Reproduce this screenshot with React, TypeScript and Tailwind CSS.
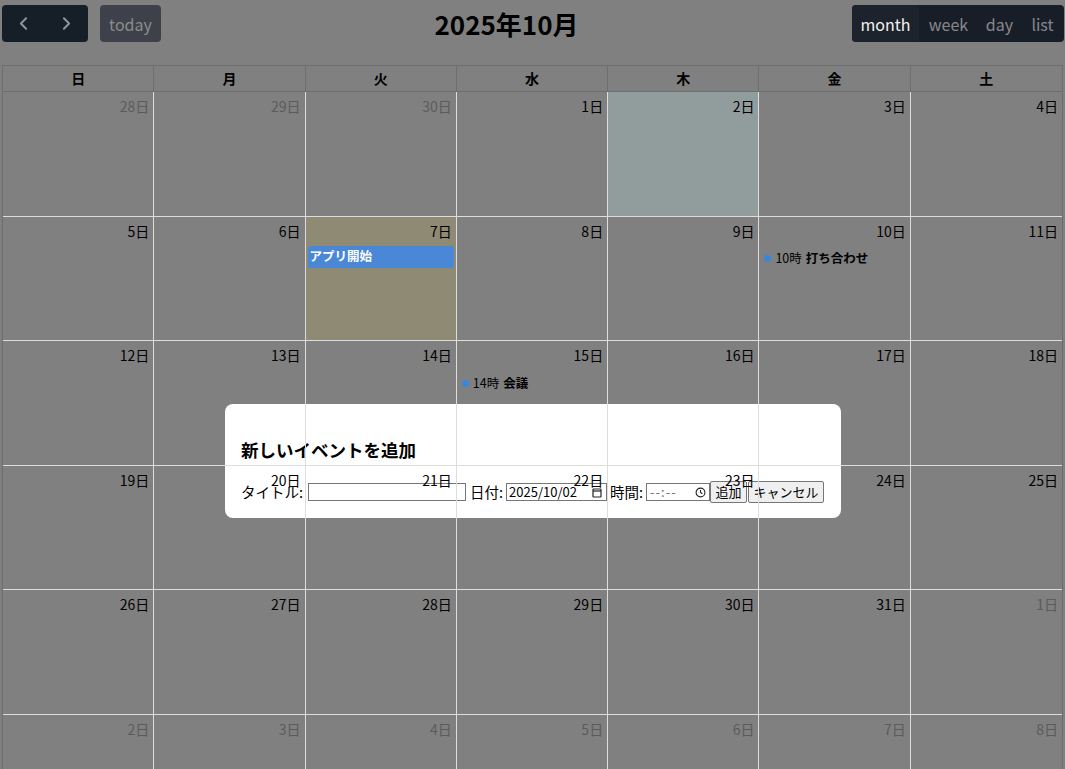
import React from 'react';
import { ChevronLeft, ChevronRight } from 'lucide-react';

const FONT = '"Noto Sans CJK JP", "Noto Sans", sans-serif';

type Day = { n: number; other?: boolean; today?: boolean; selected?: boolean };

const weeks: Day[][] = [
  [{ n: 28, other: true }, { n: 29, other: true }, { n: 30, other: true }, { n: 1 }, { n: 2, selected: true }, { n: 3 }, { n: 4 }],
  [{ n: 5 }, { n: 6 }, { n: 7, today: true }, { n: 8 }, { n: 9 }, { n: 10 }, { n: 11 }],
  [{ n: 12 }, { n: 13 }, { n: 14 }, { n: 15 }, { n: 16 }, { n: 17 }, { n: 18 }],
  [{ n: 19 }, { n: 20 }, { n: 21 }, { n: 22 }, { n: 23 }, { n: 24 }, { n: 25 }],
  [{ n: 26 }, { n: 27 }, { n: 28 }, { n: 29 }, { n: 30 }, { n: 31 }, { n: 1, other: true }],
  [{ n: 2, other: true }, { n: 3, other: true }, { n: 4, other: true }, { n: 5, other: true }, { n: 6, other: true }, { n: 7, other: true }, { n: 8, other: true }],
];

const weekdays = ['日', '月', '火', '水', '木', '金', '土'];

function DotEvent({ time, title }: { time: string; title: string }) {
  return (
    <div className="flex items-center h-[22px] mt-[6px] mx-[2px] px-[2px] text-[12.5px] text-black">
      <span className="w-[7px] h-[7px] rounded-full bg-[#3788d8] mr-[4px] ml-[1px]" />
      <span>{time}</span>
      <span className="ml-[4px] font-bold">{title}</span>
    </div>
  );
}

function DayCell({ day, col, week }: { day: Day; col: number; week: number }) {
  let bg = '';
  if (day.today) bg = 'bg-[#8f8a73]';
  if (day.selected) bg = 'bg-[#919c9d]';
  return (
    <div className={`h-[124.5px] border-b border-[#dddddd] ${col < 6 ? 'border-r' : ''} ${bg}`}>
      <div className={`flex justify-end pt-[4px] pr-[4px] text-[14px] ${day.other ? 'text-[#5b5b5b]' : 'text-black'}`}>
        {day.n}日
      </div>
      {week === 1 && col === 2 && (
        <div className="mt-[4px] mx-[2px] h-[22px] flex items-center px-[2px] rounded-[3px] bg-[#4a88d7] text-white font-bold text-[12.5px]">
          アプリ開始
        </div>
      )}
      {week === 1 && col === 5 && <DotEvent time="10時" title="打ち合わせ" />}
      {week === 2 && col === 3 && <DotEvent time="14時" title="会議" />}
    </div>
  );
}

export default function App() {
  return (
    <div className="relative min-h-screen bg-[#808080] px-[2px] pt-[5px] pb-[40px]" style={{ fontFamily: FONT }}>
      {/* Toolbar */}
      <div className="flex justify-between items-center mb-[23px]">
        <div className="flex items-center gap-[12px]">
          <div className="flex rounded-[4px] overflow-hidden bg-[#161f28]">
            <button className="w-[43px] h-[37px] flex items-center justify-center text-[#8b96a3]">
              <ChevronLeft size={21} strokeWidth={2.2} />
            </button>
            <button className="w-[43px] h-[37px] flex items-center justify-center text-[#8b96a3]">
              <ChevronRight size={21} strokeWidth={2.2} />
            </button>
          </div>
          <button className="h-[37px] w-[61px] rounded-[4px] bg-[#3e4149] text-[#8c8c8c] text-[16px]">today</button>
        </div>
        <h2 className="text-[26px] font-bold text-black leading-none">2025年10月</h2>
        <div className="flex rounded-[4px] overflow-hidden bg-[#181e28] text-[16px] mr-[-1px]">
          <button className="h-[37px] w-[67px] bg-[#1d232c] text-[#f2f2f2]">month</button>
          <button className="h-[37px] w-[59px] text-[#888888]">week</button>
          <button className="h-[37px] w-[43px] text-[#888888]">day</button>
          <button className="h-[37px] w-[43px] text-[#888888]">list</button>
        </div>
      </div>

      {/* Header row */}
      <div className="grid grid-cols-7 border border-[#6e6e6e] h-[27px]">
        {weekdays.map((w, i) => (
          <div key={w} className={`flex items-center justify-center text-[14px] font-bold text-black ${i < 6 ? 'border-r border-[#6e6e6e]' : ''}`}>
            {w}
          </div>
        ))}
      </div>

      {/* Body */}
      <div className="relative z-10 grid grid-cols-7 border-l border-r border-[#6e6e6e]">
        {weeks.map((wk, wi) =>
          wk.map((d, ci) => <DayCell key={`${wi}-${ci}`} day={d} col={ci} week={wi} />)
        )}
      </div>

      {/* Modal */}
      <div className="absolute z-0 left-[225px] top-[404px] w-[616px] bg-white rounded-[8px] px-[16px] pt-[34px] pb-[15px] text-black">
        <h3 className="text-[17.5px] font-bold leading-[24px]">新しいイベントを追加</h3>
        <div className="flex items-center mt-[19px] h-[22px] text-[14.5px] whitespace-nowrap">
          <span className="shrink-0">タイトル:</span>
          <span className="shrink-0 ml-[5px] w-[158px] h-[18px] border border-[#767676] bg-white" />
          <span className="shrink-0 ml-[4px]">日付:</span>
          <span className="shrink-0 ml-[3px] w-[101px] h-[18px] border border-[#767676] flex items-center justify-between pl-[2px] pr-[4px] text-[13px]">
            <span>2025/10/02</span>
            <svg width="10" height="11" viewBox="0 0 10 11" fill="none" stroke="#222" strokeWidth="1.2">
              <rect x="1" y="2" width="8" height="8" rx="0.5" />
              <line x1="1" y1="4" x2="9" y2="4" />
            </svg>
          </span>
          <span className="shrink-0 ml-[3px]">時間:</span>
          <span className="shrink-0 ml-[3px] w-[64px] h-[18px] border border-[#767676] flex items-center justify-between pl-[3px] pr-[3px] text-[13px] tracking-[1px] text-[#757575]">
            <span>--:--</span>
            <svg width="11" height="11" viewBox="0 0 12 12" fill="none" stroke="#222" strokeWidth="1.2">
              <circle cx="6" cy="6" r="4.8" />
              <path d="M6 3.2V6l2 1.4" />
            </svg>
          </span>
          <button className="shrink-0 w-[37px] h-[22px] border border-[#767676] bg-[#efefef] rounded-[2px] text-[13px]">追加</button>
          <button className="shrink-0 ml-[1px] w-[76px] h-[22px] border border-[#767676] bg-[#efefef] rounded-[2px] text-[13px]">キャンセル</button>
        </div>
      </div>
    </div>
  );
}
